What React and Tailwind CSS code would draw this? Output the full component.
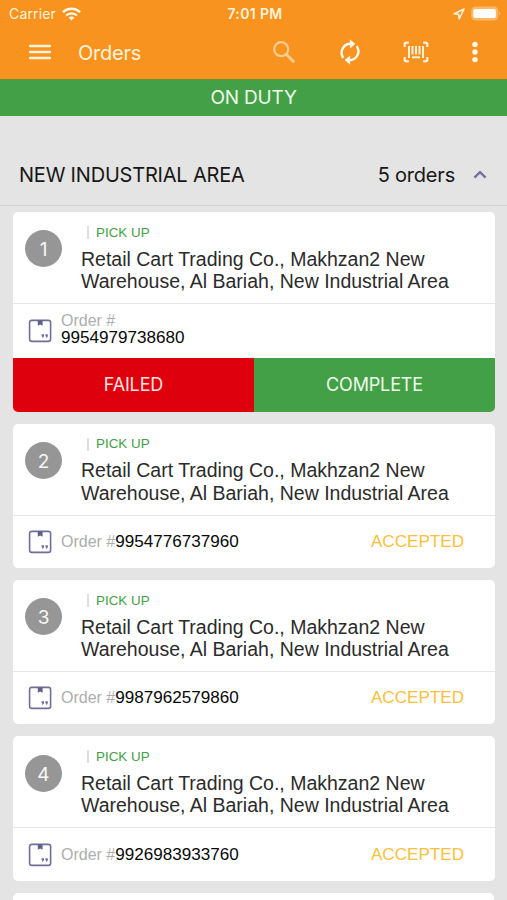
export default function App() {
  return (
    <div className="h-[900px] w-full overflow-hidden bg-[#e4e4e4] font-['Liberation_Sans',Arial,sans-serif]">
      <header className="h-[79px] bg-[#f7931e] font-['Inter',sans-serif] text-[#fff3dc]">
        <div className="grid h-[27px] grid-cols-3 items-center pl-[9px] pr-[6px]">
          <div className="flex items-center gap-[6px]">
            <span className="text-[14px] leading-none tracking-[0.15px]">Carrier</span>
            <WifiIcon />
          </div>
          <span className="text-center text-[14px] font-semibold leading-none tracking-[0.35px]">7:01 PM</span>
          <div className="flex items-center justify-end gap-[6px]">
            <LocationIcon />
            <BatteryIcon />
          </div>
        </div>
        <div className="flex h-[50px] items-center pl-[29px] pr-[29px]">
          <MenuIcon />
          <h1 className="ml-[27px] pt-[2px] text-[20px] leading-none tracking-[-0.25px]">Orders</h1>
          <div className="ml-auto flex items-center">
            <SearchIcon />
            <RefreshIcon />
            <ScanIcon />
            <MoreIcon />
          </div>
        </div>
      </header>

      <div className="flex h-[37px] items-center justify-center border-t border-[#708f2c] bg-[#43a047] font-['Inter',sans-serif] text-[19px] tracking-[-0.2px] text-[#effbea]">
        ON DUTY
      </div>

      <section>
        <div className="flex h-[90px] items-end border-b border-[#d2d2d2] pb-[18px] pl-[19px] pr-5 font-['Inter',sans-serif] text-[20px] leading-6 text-[#171717]">
          <h2 className="tracking-[-0.2px]">NEW INDUSTRIAL AREA</h2>
          <span className="ml-auto mr-[18px] tracking-[-0.2px]">5 orders</span>
          <ChevronIcon />
        </div>
        <div className="flex flex-col gap-3 px-[13px] pt-[6px]">
          {orders.map((order) => (
            <OrderCard key={order.position} {...order} />
          ))}
          <div className="h-[20px] rounded-t-[5px] bg-white" />
        </div>
      </section>
    </div>
  );
}

function OrderCard({ position, number, active }) {
  return (
    <article className="w-[482px] shrink-0 overflow-hidden rounded-[5px] bg-white">
      <div className="flex h-[91px] pl-3 pt-[12px]">
        <div className="mt-[6.4px] flex size-[37px] shrink-0 items-center justify-center rounded-full bg-[#969696] pt-[2px] font-['Inter',sans-serif] text-[19px] leading-none text-[#f7f7f7]">
          {position}
        </div>
        <div className="ml-[19px]">
          <div className="flex h-[17px] items-center gap-[7px] pl-[6px] text-[13.4px] leading-none text-[#43a047]">
            <span className="h-[13px] w-[2px] bg-[#dedede]" />
            PICK UP
          </div>
          <p className="mt-[6.6px] whitespace-nowrap text-[19.5px] leading-[22.5px] text-[#2b2b2b]">
            Retail Cart Trading Co., Makhzan2 New
            <br />
            Warehouse, Al Bariah, New Industrial Area
          </p>
        </div>
      </div>
      {active ? (
        <>
          <div className="flex h-[54.6px] items-center border-t border-[#e8e8e8] pl-[15px]">
            <PackageIcon />
            <div className="mb-[2px] ml-[9px] flex flex-col">
              <span className="text-[16px] leading-[17px] text-[#adadad]">Order #</span>
              <span className="text-[17.1px] leading-[18px] text-[#080808]">{number}</span>
            </div>
          </div>
          <div className="grid h-[54px] grid-cols-2 font-['Inter',sans-serif] text-[18px] tracking-[-0.15px]">
            <button className="bg-[#de000c] text-[#ffe3e1]">FAILED</button>
            <button className="bg-[#43a047] text-[#effbea]">COMPLETE</button>
          </div>
        </>
      ) : (
        <div className="flex h-[53.4px] items-center border-t border-[#e8e8e8] pl-[15px] pr-[31px]">
          <PackageIcon />
          <div className="ml-[9px] flex items-baseline">
            <span className="text-[16px] leading-[17px] text-[#adadad]">Order #</span>
            <span className="text-[17.1px] leading-[18px] text-[#080808]">{number}</span>
          </div>
          <span className="ml-auto text-[17.1px] text-[#fbbf3b]">ACCEPTED</span>
        </div>
      )}
    </article>
  );
}

function WifiIcon() {
  return (
    <svg width="19" height="14" viewBox="0 0 19 14" fill="none" stroke="#fff9ee" strokeWidth="2.6">
      <path d="M1 5.2C5.5.6 13.5.6 18 5.2" />
      <path d="M4.1 8.5c3-2.9 7.8-2.9 10.8 0" strokeWidth="2.3" />
      <path d="M6.6 10.5c1.6-1.5 4.2-1.5 5.8 0l-2.9 3z" fill="#fff9ee" stroke="none" />
    </svg>
  );
}

function LocationIcon() {
  return (
    <svg width="12" height="12" viewBox="0 0 12 12" fill="none" stroke="#fff0d8" strokeWidth="1.6" strokeLinejoin="round">
      <path d="M11 1 1.2 5.8l4.4.6.6 4.4z" />
    </svg>
  );
}

function BatteryIcon() {
  return (
    <svg width="30" height="15" viewBox="0 0 30 15">
      <rect x=".2" y=".6" width="27" height="13.8" rx="4.2" fill="#fab866" />
      <rect x="2.3" y="2.9" width="22.6" height="9.2" rx="2.2" fill="#fffdf8" />
      <path d="M28.2 5.3c1.6.8 1.6 3.4 0 4.2z" fill="#fbc17c" />
    </svg>
  );
}

function MenuIcon() {
  return (
    <svg width="22" height="18" viewBox="0 0 22 18" stroke="#fff3dc" strokeWidth="2.4" strokeLinecap="round">
      <path d="M1 3h20M1 9h20M1 15h20" />
    </svg>
  );
}

function SearchIcon() {
  return (
    <svg className="mr-[43px]" width="24" height="24" viewBox="0 0 24 24" fill="none" stroke="#fbcb90" strokeWidth="2.2">
      <circle cx="9.2" cy="9.2" r="7" />
      <path d="m14 14 8.2 8.2" strokeWidth="3" />
    </svg>
  );
}

function RefreshIcon() {
  return (
    <svg className="mr-[42px]" width="22" height="26" viewBox="0 0 22 26" fill="none" stroke="#fffaf0" strokeWidth="2.5">
      <path d="M4.3 18.9A9 9 0 0 1 11.8 4.7M17.7 7.1A9 9 0 0 1 10.2 21.3" />
      <path d="M11.2.8 16 4.9l-4.8 4.1zM10.8 17 6 21.1l4.8 4.1z" fill="#fffaf0" stroke="#fffaf0" strokeWidth=".5" strokeLinejoin="round" />
    </svg>
  );
}

function ScanIcon() {
  return (
    <svg className="mr-[43px]" width="26" height="22" viewBox="0 0 26 22" fill="none" stroke="#fff2dc" strokeLinejoin="round">
      <path d="M1.7 6V3.2q0-1.5 1.5-1.5H5.8M20.2 1.7h2.6q1.5 0 1.5 1.5V6M1.7 16v2.8q0 1.5 1.5 1.5h2.6M20.2 20.3h2.6q1.5 0 1.5-1.5V16" strokeWidth="2.2" />
      <path d="M6 5v12M20 5v12" strokeWidth="2" />
      <path d="M9.5 5v8.5M13 5v8.5M16.5 5v8.5" strokeWidth="2" />
      <path d="M9 16.3h8" strokeWidth="2" />
    </svg>
  );
}

function MoreIcon() {
  return (
    <svg width="6" height="22" viewBox="0 0 6 22" fill="#fff9ee">
      <circle cx="3" cy="3.4" r="2.7" />
      <circle cx="3" cy="11" r="2.7" />
      <circle cx="3" cy="18.6" r="2.7" />
    </svg>
  );
}

function ChevronIcon() {
  return (
    <svg className="mb-[8px]" width="14" height="9" viewBox="0 0 14 9" fill="none" stroke="#74719b" strokeWidth="2.4">
      <path d="M1.4 7.7 7 2.1l5.6 5.6" />
    </svg>
  );
}

function PackageIcon() {
  return (
    <svg className="shrink-0" width="24" height="24" viewBox="0 0 24 24" fill="none" stroke="#706d99" strokeWidth="1.6">
      <rect x="1.6" y="1.4" width="21" height="21" rx="2.2" />
      <path d="M9.8 1.6h4.8v5.2l-2.4-1.2-2.4 1.2z" fill="#625e8c" stroke="none" />
      <path d="M13.6 15.2h2.4v2l-.9 1.6h-.8v-1.6h-.7zM17.4 15.2h2.4v2l-.9 1.6h-.8v-1.6h-.7z" fill="#706d99" stroke="none" />
    </svg>
  );
}

const orders = [
  { position: 1, number: "9954979738680", active: true },
  { position: 2, number: "9954776737960" },
  { position: 3, number: "9987962579860" },
  { position: 4, number: "9926983933760" },
];
